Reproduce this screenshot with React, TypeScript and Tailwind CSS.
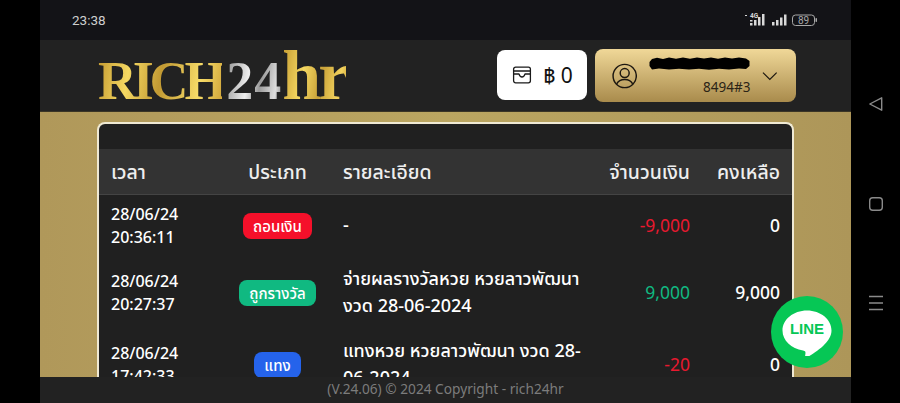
import React from 'react';

interface TxRow {
  date: string;
  time: string;
  type: string;
  badge: string;
  detail: string;
  amount: string;
  amountColor: string;
  balance: string;
}

const rows: TxRow[] = [
  { date: '28/06/24', time: '20:36:11', type: 'ถอนเงิน', badge: 'bg-[#f5102a]', detail: '-', amount: '-9,000', amountColor: 'text-[#e8192f]', balance: '0' },
  { date: '28/06/24', time: '20:27:37', type: 'ถูกรางวัล', badge: 'bg-[#10b981]', detail: 'จ่ายผลรางวัลหวย หวยลาวพัฒนา งวด 28-06-2024', amount: '9,000', amountColor: 'text-[#10b981]', balance: '9,000' },
  { date: '28/06/24', time: '17:42:33', type: 'แทง', badge: 'bg-[#2563eb]', detail: 'แทงหวย หวยลาวพัฒนา งวด 28-06-2024', amount: '-20', amountColor: 'text-[#e8192f]', balance: '0' },
];

const StatusIcons = () => (
  <svg width="76" height="16" viewBox="0 0 76 16" className="text-[#d8d8d8]" fill="currentColor">
    <rect x="0" y="3" width="2" height="1" />
    <rect x="5" y="8" width="2.5" height="1.500" />
    <rect x="5" y="11" width="2.5" height="2.5" />
    <rect x="9" y="8" width="2.5" height="5.500" />
    <rect x="13" y="5" width="2.5" height="8.500" />
    <rect x="17" y="2" width="2.5" height="11.500" />
    <text x="9" y="6" textAnchor="middle" fontSize="6.5" fontWeight="700" fontFamily="Roboto, sans-serif">4G</text>
    <rect x="27" y="10" width="2.5" height="3.500" />
    <rect x="31" y="8" width="2.5" height="5.500" />
    <rect x="35" y="5.500" width="2.5" height="8" />
    <rect x="39" y="2.500" width="2.5" height="11" />
    <rect x="47.500" y="3" width="22" height="10.500" rx="3" fill="none" stroke="#a8a8a8" strokeWidth="1" />
    <rect x="70.500" y="6" width="1.500" height="4" rx="0.7" fill="#a8a8a8" />
    <text x="58.500" y="12" textAnchor="middle" fontSize="10" fill="#a8a8a8" fontFamily="Roboto, sans-serif">89</text>
  </svg>
);

const WalletIcon = () => (
  <svg width="20" height="18" viewBox="0 0 20 18" fill="none" stroke="#1a1a1a" strokeWidth="1.3" strokeLinejoin="round" strokeLinecap="round">
    <rect x="1.600" y="1.200" width="16.800" height="15.600" rx="2" />
    <path d="M1.600 5h16.800" />
    <path d="M1.600 8h5.400c.6 2 1.600 3 3 3s2.400-1 3-3h5.400" />
  </svg>
);

const UserIcon = () => (
  <svg width="26" height="26" viewBox="0 0 26 26" fill="none" stroke="#1c1710" strokeWidth="1.5">
    <circle cx="13" cy="13" r="11.900" />
    <circle cx="13" cy="10" r="4.600" />
    <path d="M4.800 21c1.600-3 4.600-4.400 8.200-4.400s6.600 1.400 8.200 4.400" />
  </svg>
);

// the number on the screenshot was scribbled over by hand
const Scribble = () => (
  <svg width="101" height="14" viewBox="0 0 101 14" fill="#000">
    <path d="M3 2 L8 .8 L14 2 L20 .6 L27 1.800 L34 .5 L41 1.800 L48 .5 L55 1.600 L62 .4 L69 1.800 L76 .5 L83 1.600 L90 .4 L97 1.500 L100.500 4 L100.500 9 L97 12 L90 11.500 L80 12.500 L70 11.800 L60 12.800 L50 11.800 L40 12.500 L30 11.800 L20 12.600 L10 11.600 L3 12.500 L.5 9 L.5 5 Z" />
  </svg>
);

const LineBubble = () => (
  <svg width="50" height="46" viewBox="0 0 50 46">
    <path
      fill="#fff"
      d="M25 .5C11.400.5.5 9.500.5 20.600c0 10 8.700 18.300 20.600 19.900.8.200 1.900.5 2.200 1.200.2.600.2 1.600.1 2.300l-.3 2c-.1.500-.4 2.200 2 1.200s13-7.700 17.800-13.200c3.300-3.600 6.600-8 6.600-13.600C49.500 9.500 38.600.5 25 .5z"
    />
  </svg>
);

const AndroidNav = () => (
  <div className="flex w-[49px] shrink-0 flex-col items-center bg-black pt-[96px]">
    <svg width="16" height="16" viewBox="0 0 16 16" fill="none" stroke="#8a8a8a" strokeWidth="1.4" strokeLinejoin="round">
      <path d="M13.700 1.800v12.400L1.800 8z" />
    </svg>
    <svg width="16" height="16" viewBox="0 0 16 16" fill="none" stroke="#8a8a8a" strokeWidth="1.4" className="mt-[84px]">
      <rect x="1.700" y="1.700" width="12.600" height="12.600" rx="3" />
    </svg>
    <svg width="16" height="16" viewBox="0 0 16 16" fill="none" stroke="#8a8a8a" strokeWidth="1.3" className="mt-[83px]">
      <path d="M1 1.500h14M1 8h14M1 14.500h14" />
    </svg>
  </div>
);

const App: React.FC = () => {
  return (
    <div className="relative flex h-[403px] w-[900px] overflow-hidden bg-black font-['Noto_Sans','Noto_Sans_Thai',sans-serif] text-white">
      <div className="w-10 shrink-0 bg-black" />

      <div className="flex min-w-0 flex-1 flex-col">
        {/* status bar */}
        <div className="flex h-10 shrink-0 items-center justify-between bg-[#131317] pl-8 pr-[30px]">
          <span className="font-['Roboto',sans-serif] text-[13.500px] text-[#cfcfcf]">23:38</span>
          <StatusIcons />
        </div>

        {/* header */}
        <div className="flex h-[72px] shrink-0 items-center justify-between border-b border-[#3a3526] bg-[#222222] pl-[58px] pr-[55px]">
          <div className="flex items-baseline font-['Liberation_Serif',serif] font-bold leading-none">
            <span className="bg-[linear-gradient(100deg,#c2982f,#f5d862_25%,#c29a33_50%,#f7dc68_80%,#cfa338)] bg-clip-text text-[54px] tracking-[-4.200px] text-transparent">RICH</span>
            <span className="ml-[4px] bg-[linear-gradient(100deg,#8d8d8d,#efefef_40%,#9a9a9a_60%,#dedede_85%,#777)] bg-clip-text text-[54px] tracking-[1px] text-transparent">24</span>
            <span className="bg-[linear-gradient(100deg,#c2982f,#f5d862_35%,#c9a239_60%,#f3d35e_85%,#c2982f)] bg-clip-text text-[70px] tracking-[-3px] text-transparent">hr</span>
          </div>
          <div className="flex items-center gap-2">
            <div className="mb-[1px] flex h-[50px] w-[90px] items-center justify-center gap-[11px] rounded-lg bg-white pl-[1px] text-black">
              <WalletIcon />
              <span className="text-[21px] leading-none text-[#111]">฿ 0</span>
            </div>
            <div className="flex h-[53px] w-[201px] items-center rounded-lg bg-[linear-gradient(180deg,#f0d898,#a98b4c)] pl-[17px] pr-[18px]">
              <UserIcon />
              <div className="ml-3 flex w-[101px] flex-col items-end">
                <Scribble />
                <span className="mt-[8px] text-[13.500px] leading-[16px] text-[#2b2416]">8494#3</span>
              </div>
              <svg width="16" height="10" viewBox="0 0 16 10" fill="none" stroke="#1c1710" strokeWidth="1.2" className="ml-[12px]">
                <path d="M1 1.500l7 7 7-7" />
              </svg>
            </div>
          </div>
        </div>

        {/* content */}
        <div className="min-h-0 flex-1 overflow-hidden bg-[linear-gradient(90deg,#b0985a,#bba661_50%,#ad9659)] px-[57px] pt-[10px]">
          <div className="rounded-t-lg border-2 border-b-0 border-[#efe9d4] bg-[#202020]">
            <div className="h-[25px]" />
            <table className="w-full table-fixed border-collapse">
              <thead>
                <tr className="h-[45px] border-b border-[#444] bg-[#333333] text-[19.500px] font-medium text-[#eeeeee]">
                  <th className="w-[126px] pl-[12px] text-left font-medium">เวลา</th>
                  <th className="w-[105px] text-center font-medium">ประเภท</th>
                  <th className="pl-[13px] text-left font-medium">รายละเอียด</th>
                  <th className="w-[120px] pr-[12px] text-right font-medium">จำนวนเงิน</th>
                  <th className="w-[90px] pr-[12px] text-right font-medium">คงเหลือ</th>
                </tr>
              </thead>
              <tbody>
                {rows.map((row) => (
                  <tr key={row.time} className="font-medium">
                    <td className="py-[8px] pl-[12px] text-[16px] leading-[23px]">
                      {row.date}
                      <br />
                      {row.time}
                    </td>
                    <td className="text-center">
                      <span className={`inline-block rounded-lg px-[10px] text-[15px] leading-[26px] ${row.badge}`}>{row.type}</span>
                    </td>
                    <td className="pb-[10px] pl-[13px] pt-[8px] text-[18px] leading-[27px]">{row.detail}</td>
                    <td className={`pr-[12px] text-right text-[17.500px] font-normal ${row.amountColor}`}>{row.amount}</td>
                    <td className="pr-[12px] text-right text-[17.500px]">{row.balance}</td>
                  </tr>
                ))}
              </tbody>
            </table>
          </div>
        </div>

        {/* footer */}
        <div className="flex h-[26px] shrink-0 items-center justify-center bg-[#222222] pb-[2px] text-[13.700px] text-[#7c7c7c]">
          (V.24.06) © 2024 Copyright - rich24hr
        </div>
      </div>

      <AndroidNav />

      {/* LINE floating button */}
      <div className="absolute left-[771px] top-[296px] flex h-[72px] w-[72px] items-center justify-center rounded-full bg-[#06c755]">
        <div className="relative mt-[2px] flex h-[46px] w-[50px] justify-center">
          <LineBubble />
          <span className="absolute top-[9px] font-['Liberation_Sans',sans-serif] text-[15px] font-bold leading-[20px] text-[#06c755]">LINE</span>
        </div>
      </div>
    </div>
  );
};

export default App;
